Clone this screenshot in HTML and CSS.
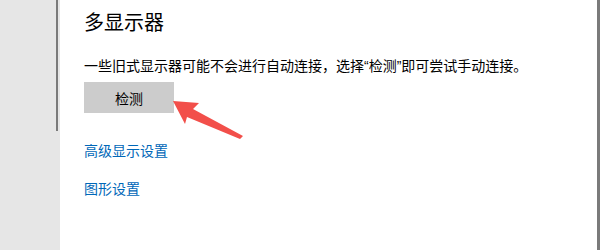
FILE: index.html
```html
<!DOCTYPE html>
<html lang="zh-CN">
<head>
<meta charset="utf-8">
<link rel="stylesheet" href="styles.css">
</head>
<body>
<div class="window">
  <div class="nav"><div class="thumb"></div></div>
  <div class="main">
    <h1 class="title">多显示器</h1>
    <p class="desc">一些旧式显示器可能不会进行自动连接，选择“检测”即可尝试手动连接。</p>
    <button class="btn">检测</button>
    <a class="link link-first" href="#">高级显示设置</a>
    <a class="link" href="#">图形设置</a>
    <svg class="arrow" width="80" height="50" viewBox="0 0 80 50">
      <polygon points="1,2 27,4 21,10 71,37 68,40 15,18 13,25" fill="#f24f4a"/>
    </svg>
  </div>
  <div class="edge"></div>
</div>
</body>
</html>
```
FILE: styles.css
```css
html, body {
  margin: 0;
  padding: 0;
  background: #ffffff;
}
body {
  font-family: "Liberation Sans", "Noto Sans CJK SC", sans-serif;
  color: #000000;
}
.window {
  display: flex;
  width: 600px;
  height: 250px;
  overflow: hidden;
}
.nav {
  position: relative;
  width: 60px;
  flex: none;
  background: #e6e6e6;
}
.thumb {
  position: absolute;
  left: 56px;
  top: 0;
  width: 2px;
  height: 131px;
  background: #7a7a7a;
}
.main {
  position: relative;
  flex: 1;
  display: flex;
  flex-direction: column;
  align-items: flex-start;
  padding-left: 24px;
}
.title {
  margin: 9px 0 0;
  font-size: 20px;
  line-height: 28px;
  font-weight: normal;
}
.desc {
  margin: 19px 0 0;
  font-size: 14px;
  line-height: 20px;
}
.btn {
  margin-top: 6px;
  width: 90px;
  height: 31px;
  border: none;
  padding: 0;
  background: #cccccc;
  font-family: inherit;
  font-size: 14px;
  color: #000000;
}
.link {
  display: block;
  font-size: 14px;
  line-height: 20px;
  color: #0067b8;
  text-decoration: none;
  margin-top: 18px;
}
.link-first {
  margin-top: 28px;
}
.arrow {
  position: absolute;
  left: 112px;
  top: 99px;
}
.edge {
  width: 3px;
  flex: none;
  background: #7a7a7a;
}
```
